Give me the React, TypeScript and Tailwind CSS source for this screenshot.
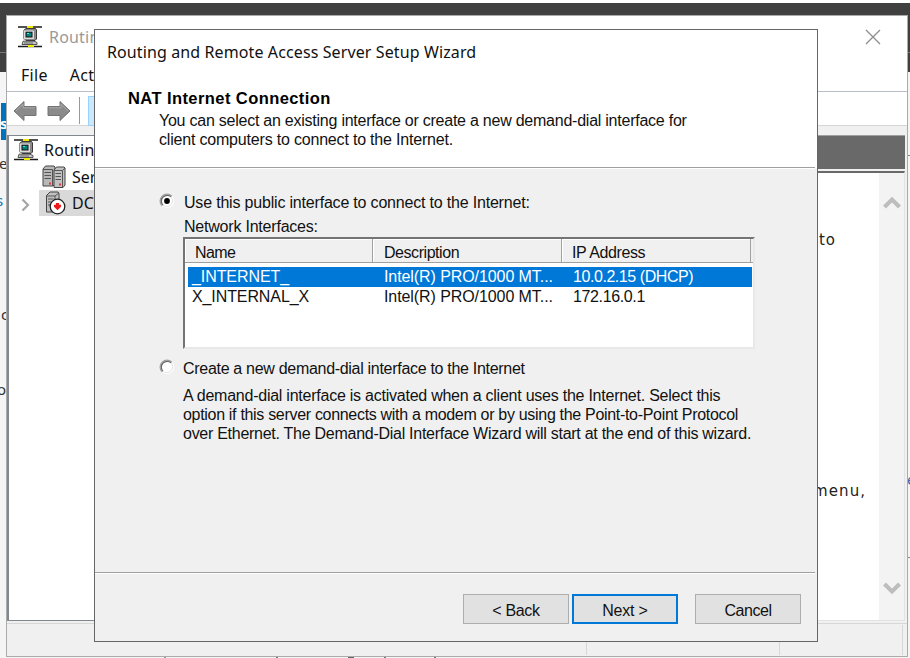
import type { ReactNode } from "react";

function ServerNetIcon() {
  return (
    <svg width="24" height="24" viewBox="0 0 24 24" className="block shrink-0">
      <path d="M0 2h24M0 21.500h24" stroke="#1a1a1a" strokeWidth="1.700" />
      <path d="M9 2h6M12 2v2M10 21h6" stroke="#f0e800" strokeWidth="2.200" />
      <path d="M6 5l2-1.500h9.500l1 1.500v9l-1.500 1.500H8z" fill="#8b8b8b" stroke="#3a3a3a" />
      <rect x="5.500" y="5" width="11" height="9.500" rx="1.200" fill="#dcdcdc" stroke="#777" strokeWidth="0.800" />
      <rect x="8" y="7.200" width="6" height="4.800" fill="#087f78" stroke="#111" />
      <path d="M9 8.500h2" stroke="#35f0e0" />
      <path d="M5 16.200h11l3 1.300v2H4z" fill="#c8c8c8" stroke="#444" strokeWidth="0.900" />
      <path d="M6 18h9" stroke="#666" />
    </svg>
  );
}

function ServersIcon() {
  return (
    <svg width="24" height="24" viewBox="0 0 24 24" className="block shrink-0">
      <path d="M1 4l2.500-3H12l1 1v17l-2 2H1z" fill="#b8b8b8" stroke="#444" />
      <path d="M1 4.500h9.500V21M2.500 7.500h6.500M2.500 10.500h6.500M2.500 13.500h6.500" stroke="#555" fill="none" />
      <path d="M12 5l2.500-3H22l1 1v17l-2 2.500h-9z" fill="#c2c2c2" stroke="#444" />
      <path d="M12 5.500h8.500V22M13.500 8.500h5.500M13.500 11.500h5.500M13.500 14.500h5.500M23 3l-2.500 2.500" stroke="#555" fill="none" />
      <path d="M7 17.500h2v2H7zM17 18.500h2v2h-2z" fill="#e33" />
    </svg>
  );
}

function StoppedServerIcon() {
  return (
    <svg width="24" height="24" viewBox="0 0 24 24" className="block shrink-0">
      <path d="M3.500 4.500L7 1h8l1 1.500V17l-3 4H3.500z" fill="#c0c0c0" stroke="#444" />
      <path d="M3.500 5H12v15M5 8h5.500M5 11h5.500M5 14h5.500M16 2l-4 3" stroke="#555" fill="none" />
      <circle cx="14.500" cy="15.500" r="7.300" fill="#fff" stroke="#222" strokeWidth="1.300" />
      <path d="M12.900 12h3.200v1.800H18v2l-3.500 3.500-3.500-3.500v-2h1.900z" fill="#f01818" />
    </svg>
  );
}

function NavArrow({ flip }: { flip?: boolean }) {
  return (
    <svg width="24" height="22" viewBox="0 0 24 22" className={flip ? "block -scale-x-100" : "block"}>
      <path d="M1 11L11 1.500V6.500h12v9H11v5z" fill="#8a8a8a" stroke="#747474" strokeLinejoin="round" />
      <path d="M3 11l7-6.800V7.800h12" fill="none" stroke="#a8a8a8" />
    </svg>
  );
}

function Chevron({ className }: { className: string }) {
  return (
    <svg width="18" height="14" viewBox="0 0 18 14" className={className}>
      <path d="M1.500 11L9 3.500 16.500 11" fill="none" stroke="#bdbdbd" strokeWidth="4" />
    </svg>
  );
}

function Radio({ checked }: { checked?: boolean }) {
  return (
    <svg width="16" height="16" viewBox="0 0 16 16" className="block shrink-0">
      <circle cx="8" cy="8" r="7.200" fill="#fff" />
      <path d="M3.100 12.900A6.900 6.900 0 0 1 12.900 3.100" fill="none" stroke="#a0a0a0" strokeWidth="1.200" />
      <path d="M3.900 12.100A5.800 5.800 0 0 1 12.100 3.900" fill="none" stroke="#696969" strokeWidth="1.300" />
      <path d="M12.100 3.900A5.800 5.800 0 0 1 3.900 12.100" fill="none" stroke="#e3e3e3" strokeWidth="1" />
      {checked && <circle cx="8" cy="8" r="2.900" fill="#000" />}
    </svg>
  );
}

function HeaderCell({ className, children }: { className: string; children: ReactNode }) {
  return (
    <div className={`h-[24px] border-r border-b border-[#a0a0a0] bg-[#f0f0f0] leading-[28px] shadow-[inset_1px_1px_0_#fff] ${className}`}>{children}</div>
  );
}

function Backdrop() {
  return (
    <div className="absolute inset-0 overflow-hidden bg-[#f5f5f5] font-['Noto_Sans',sans-serif] text-[15px]">
      <div className="h-[3px] bg-white" />
      <div className="h-[50px] border-b border-[#777] bg-[#404040]" />
      <div className="h-[19px] bg-[#404040]" />
      <div className="absolute top-[103px] left-[1px] h-[37px] w-[6px] bg-[#0073bd]" />
      <span className="absolute top-[112px] left-[0px] font-bold text-white">s</span>
      <span className="absolute top-[152px] left-[-1px] text-[#333]">e</span>
      <span className="absolute top-[189px] left-[-4px] text-[#2470ae]">s</span>
      <span className="absolute top-[303px] left-[1px] text-[#333]">c</span>
      <span className="absolute top-[378px] left-[-3px] text-[#333]">o</span>
      <span className="absolute top-[468px] left-[907px] text-[#2470ae]">e</span>
      <div className="absolute top-[155px] left-[907px] h-px w-[3px] bg-[#888]" />
      <div className="absolute top-[557px] left-[907px] h-px w-[3px] bg-[#888]" />
      <div className="absolute top-[656px] left-[164px] h-[2px] w-[2px] bg-[#999]" />
      <div className="absolute top-[656px] left-[276px] h-[2px] w-[2px] bg-[#777]" />
      <div className="absolute top-[656px] left-[348px] h-[2px] w-[6px] bg-[#666]" />
      <div className="absolute top-[656px] left-[384px] h-[2px] w-[2px] bg-[#777]" />
      <div className="absolute top-[656px] left-[434px] h-[2px] w-[2px] bg-[#777]" />
    </div>
  );
}

function ConsoleWindow() {
  return (
    <div className="absolute top-[15px] left-[6px] flex h-[642px] w-[902px] flex-col border border-[#ababab] bg-[#f0f0f0] font-['Noto_Sans',sans-serif]">
      <div className="flex h-[42px] shrink-0 items-center bg-white pl-[11px] text-[16px] text-[#999]">
        <ServerNetIcon />
        <span className="ml-[7px] tracking-[0.200px]">Routing</span>
        <svg width="16" height="16" viewBox="0 0 16 16" className="mr-[26px] ml-auto">
          <path d="M1 1l14 14M15 1L1 15" stroke="#8c8c8c" strokeWidth="1.300" />
        </svg>
      </div>
      <div className="flex h-[34px] shrink-0 items-center gap-[22px] border-b border-[#b8bcc4] bg-white pl-[14px] text-[16px] text-[#111]">
        <span className="tracking-[0.300px]">File</span>
        <span className="tracking-[0.300px]">Action</span>
      </div>
      <div className="flex h-[34px] shrink-0 items-center border-b border-[#d5d5d5] bg-white pt-[4px] pl-[6px]">
        <NavArrow />
        <div className="ml-[10px]"><NavArrow flip /></div>
        <div className="ml-[8px] h-[27px] w-px bg-[#999]" />
        <div className="ml-[8px] h-[30px] w-[28px] border border-[#99d1ff] bg-[#cce8ff]" />
      </div>
      <div className="mt-[9px] flex h-[486px] shrink-0">
        <div className="w-[200px] border-y border-l-2 border-[#828790] bg-white text-[16px] text-[#111]">
          <div className="flex h-[28px] items-center pl-[5px]">
            <ServerNetIcon />
            <span className="ml-[6px] tracking-[0.200px]">Routing</span>
          </div>
          <div className="flex h-[26px] items-center pl-[33px]">
            <ServersIcon />
            <span className="ml-[6px]">Server</span>
          </div>
          <div className="flex h-[26px] items-center">
            <svg width="10" height="14" viewBox="0 0 10 14" className="mt-[3px] ml-[12px]">
              <path d="M1.500 1.500L7 7l-5.500 5.500" fill="none" stroke="#a6a6a6" strokeWidth="2.200" />
            </svg>
            <div className="ml-[8px] flex h-full flex-1 items-center bg-[#d9d9d9] pl-[4px]">
              <StoppedServerIcon />
              <span className="ml-[5px]">DC1</span>
            </div>
          </div>
        </div>
        <div className="mr-[2px] flex flex-1 flex-col">
          <div className="h-[34px] border-t border-[#a0a0a0] bg-[#696969]" />
          <div className="mt-[2px] flex flex-1 border-t-2 border-r border-b border-t-[#696969] border-[#e3e3e3] bg-white">
            <div className="flex flex-1 flex-col font-['DejaVu_Sans',sans-serif] text-[15px] text-[#222]">
              <span className="mt-[56px] ml-[612px] leading-[22px] tracking-[0.800px]">to</span>
              <span className="mt-[229px] ml-[606px] leading-[22px] tracking-[1.100px]">menu,</span>
            </div>
            <div className="flex w-[25px] flex-col items-center justify-between bg-[#f3f3f3] pt-[23px] pb-[25px]">
              <Chevron className="block" />
              <Chevron className="block rotate-180" />
            </div>
          </div>
        </div>
      </div>
      <div className="mt-[2px] flex flex-1 border-t border-[#d7d7d7] py-[1px]">
        <div className="w-[580px] border-r border-[#d7d7d7]" />
        <div className="w-[193px] border-r border-[#d7d7d7]" />
        <div className="mr-[4px] flex-1 border-r border-[#d7d7d7]" />
      </div>
    </div>
  );
}

function WizardDialog() {
  return (
    <div className="absolute top-[29px] left-[94px] flex h-[613px] w-[724px] flex-col border border-[#666] bg-[#f0f0f0] text-[16px] whitespace-nowrap text-[#111]">
      <div className="mr-[2px] h-[138px] shrink-0 border-b border-[#a0a0a0] bg-white shadow-[2px_0_0_#fff]">
        <div className="pt-[10px] pl-[12px] font-['Noto_Sans',sans-serif] text-[16px] leading-[24px]">
          <span className="tracking-[0.110px]">Routing and Remote Access Server Setup Wizard</span>
        </div>
        <div className="pt-[24px] pl-[33px] text-[16.500px] leading-[20px] font-bold text-black"><span className="tracking-[0.420px]">NAT Internet Connection</span></div>
        <div className="pl-[64px] leading-[19px]">
          <div className="mt-[3px]"><span className="tracking-[-0.240px]">You can select an existing interface or create a new demand-dial interface for</span></div>
          <div><span className="tracking-[-0.190px]">client computers to connect to the Internet.</span></div>
        </div>
      </div>
      <div className="mr-[2px] h-[405px] shrink-0 border-t border-b border-t-white border-b-[#a0a0a0]">
        <div className="mt-[20px] flex h-[24px] items-center pl-[64px]">
          <Radio checked />
          <span className="mt-[3px] ml-[9px] tracking-[-0.190px]">Use this public interface to connect to the Internet:</span>
        </div>
        <div className="mt-[2px] ml-[89px] h-[22px] leading-[24px]"><span className="tracking-[-0.210px]">Network Interfaces:</span></div>
        <div className="ml-[88px] h-[112px] w-[572px] border-2 border-t-[#747474] border-r-[#e8e8e8] border-b-[#e8e8e8] border-l-[#747474] bg-white">
          <div className="flex bg-[#f0f0f0]">
            <HeaderCell className="w-[188px] pl-[10px] tracking-[-0.600px]">Name</HeaderCell>
            <HeaderCell className="w-[189px] pl-[11px] tracking-[-0.450px]">Description</HeaderCell>
            <HeaderCell className="w-[189px] pl-[10px] tracking-[-0.400px]">IP Address</HeaderCell>
            <div className="flex-1 border-b border-[#a0a0a0]" />
          </div>
          <div className="mt-[4px] mr-px ml-[3px] flex h-[20px] bg-[#0078d7] leading-[20px] text-white">
            <span className="w-[196px] pl-[4px] tracking-[-0.080px]">_INTERNET_</span>
            <span className="w-[189px] tracking-[-0.080px]">Intel(R) PRO/1000 MT...</span>
            <span className="tracking-[-0.440px]">10.0.2.15 (DHCP)</span>
          </div>
          <div className="ml-[3px] flex h-[20px] leading-[20px]">
            <span className="w-[196px] pl-[4px] tracking-[-0.100px]">X_INTERNAL_X</span>
            <span className="w-[189px] tracking-[-0.080px]">Intel(R) PRO/1000 MT...</span>
            <span className="tracking-[-0.370px]">172.16.0.1</span>
          </div>
        </div>
        <div className="mt-[6px] flex h-[24px] items-center pl-[64px]">
          <Radio />
          <span className="mt-[3px] ml-[8px] tracking-[-0.300px]">Create a new demand-dial interface to the Internet</span>
        </div>
        <div className="mt-[7px] ml-[88px] leading-[19px]">
          <div><span className="tracking-[-0.240px]">A demand-dial interface is activated when a client uses the Internet. Select this</span></div>
          <div><span className="tracking-[-0.310px]">option if this server connects with a modem or by using the Point-to-Point Protocol</span></div>
          <div><span className="tracking-[-0.270px]">over Ethernet. The Demand-Dial Interface Wizard will start at the end of this wizard.</span></div>
        </div>
      </div>
      <div className="mr-[2px] flex flex-1 items-start border-t border-white pt-[20px] pl-[368px]">
        <button className="h-[30px] w-[106px] border border-[#adadad] bg-[#e1e1e1] pt-[3px] tracking-[-0.350px]">&lt; Back</button>
        <button className="ml-[3px] h-[30px] w-[106px] border-2 border-[#0078d7] bg-[#e1e1e1] pt-[3px] tracking-[-0.200px]">Next &gt;</button>
        <button className="ml-[17px] h-[30px] w-[106px] border border-[#adadad] bg-[#e1e1e1] pt-[3px] tracking-[-0.450px]">Cancel</button>
      </div>
    </div>
  );
}

export default function App() {
  return (
    <div className="relative h-[658px] w-[910px] overflow-hidden bg-white font-['Liberation_Sans',Arial,sans-serif]">
      <Backdrop />
      <ConsoleWindow />
      <WizardDialog />
    </div>
  );
}
